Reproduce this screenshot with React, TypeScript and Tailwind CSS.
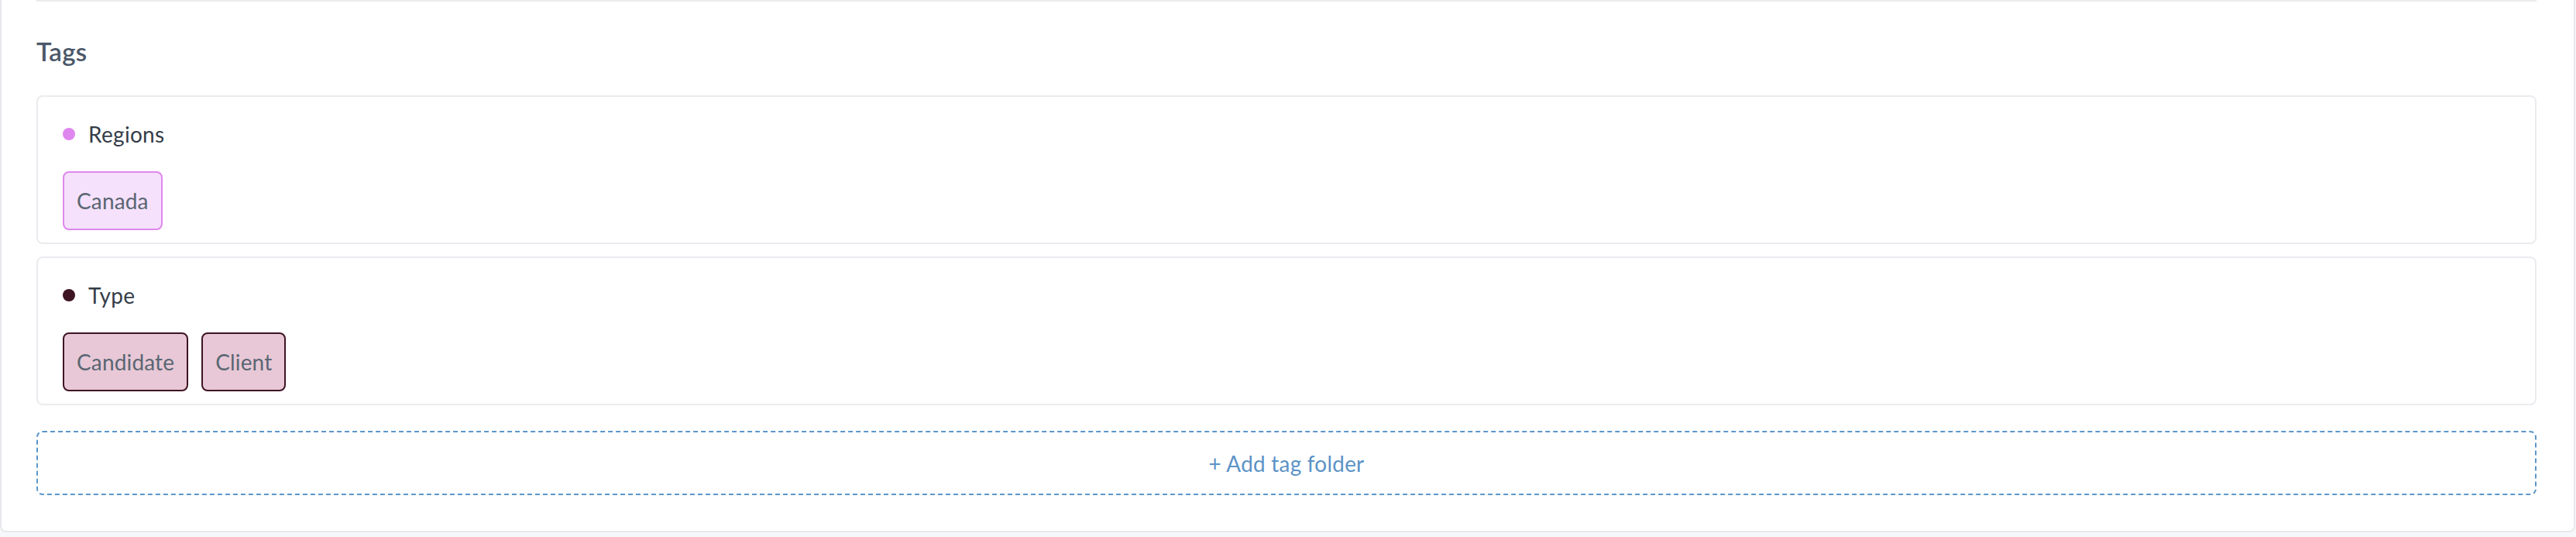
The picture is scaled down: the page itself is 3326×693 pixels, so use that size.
const font = { fontFamily: "Lato, 'Open Sans', sans-serif" };

type Tag = { name: string };
type Folder = {
  name: string;
  dot: string;
  chip: string;
  tags: Tag[];
};

const folders: Folder[] = [
  {
    name: "Regions",
    dot: "bg-[#df87ef]",
    chip: "bg-[#f5e1fb] border-[#df87ef]",
    tags: [{ name: "Canada" }],
  },
  {
    name: "Type",
    dot: "bg-[#3f1423]",
    chip: "bg-[#e8c8d6] border-[#3f1423]",
    tags: [{ name: "Candidate" }, { name: "Client" }],
  },
];

const FolderCard = ({ folder }: { folder: Folder }) => (
  <div className="h-[192px] rounded-[8px] border-2 border-[#ebebef] bg-white px-[32px] pt-[32px]">
    <div className="flex h-[32px] items-center gap-[17px]">
      <span className={`h-[16px] w-[16px] rounded-full ${folder.dot}`} />
      <span className="text-[28px] leading-[32px] tracking-[0.3px] text-[#343d48]">{folder.name}</span>
    </div>
    <div className="mt-[32px] flex gap-[17px]">
      {folder.tags.map((t) => (
        <div
          key={t.name}
          className={`flex h-[76px] items-center rounded-[8px] border-2 px-[16px] text-[28px] tracking-[0.15px] text-[#5a6673] ${folder.chip}`}
        >
          {t.name}
        </div>
      ))}
    </div>
  </div>
);

export default function App() {
  return (
    <div className="min-h-screen bg-[#f6f7fa]" style={font}>
      <div className="w-[3325px] rounded-b-[8px] border-x-2 border-b-2 border-[#e8e8ec] bg-white pb-[46px] pl-[45px] pr-[48px]">
        <div className="h-[2px] bg-[#ebebee]" />
        <h2 className="pt-[44px] text-[33px] font-semibold leading-[40px] tracking-[0.3px] text-[#4b5768]">Tags</h2>
        <div className="mt-[37px] flex flex-col gap-[16px]">
          {folders.map((f) => (
            <FolderCard key={f.name} folder={f} />
          ))}
        </div>
        <button className="mt-[33px] flex h-[83px] w-full items-center justify-center rounded-[8px] border-2 border-dashed border-[#5c97c9] text-[28px] tracking-[0.2px] text-[#5b93c6]">
          + Add tag folder
        </button>
      </div>
    </div>
  );
}
